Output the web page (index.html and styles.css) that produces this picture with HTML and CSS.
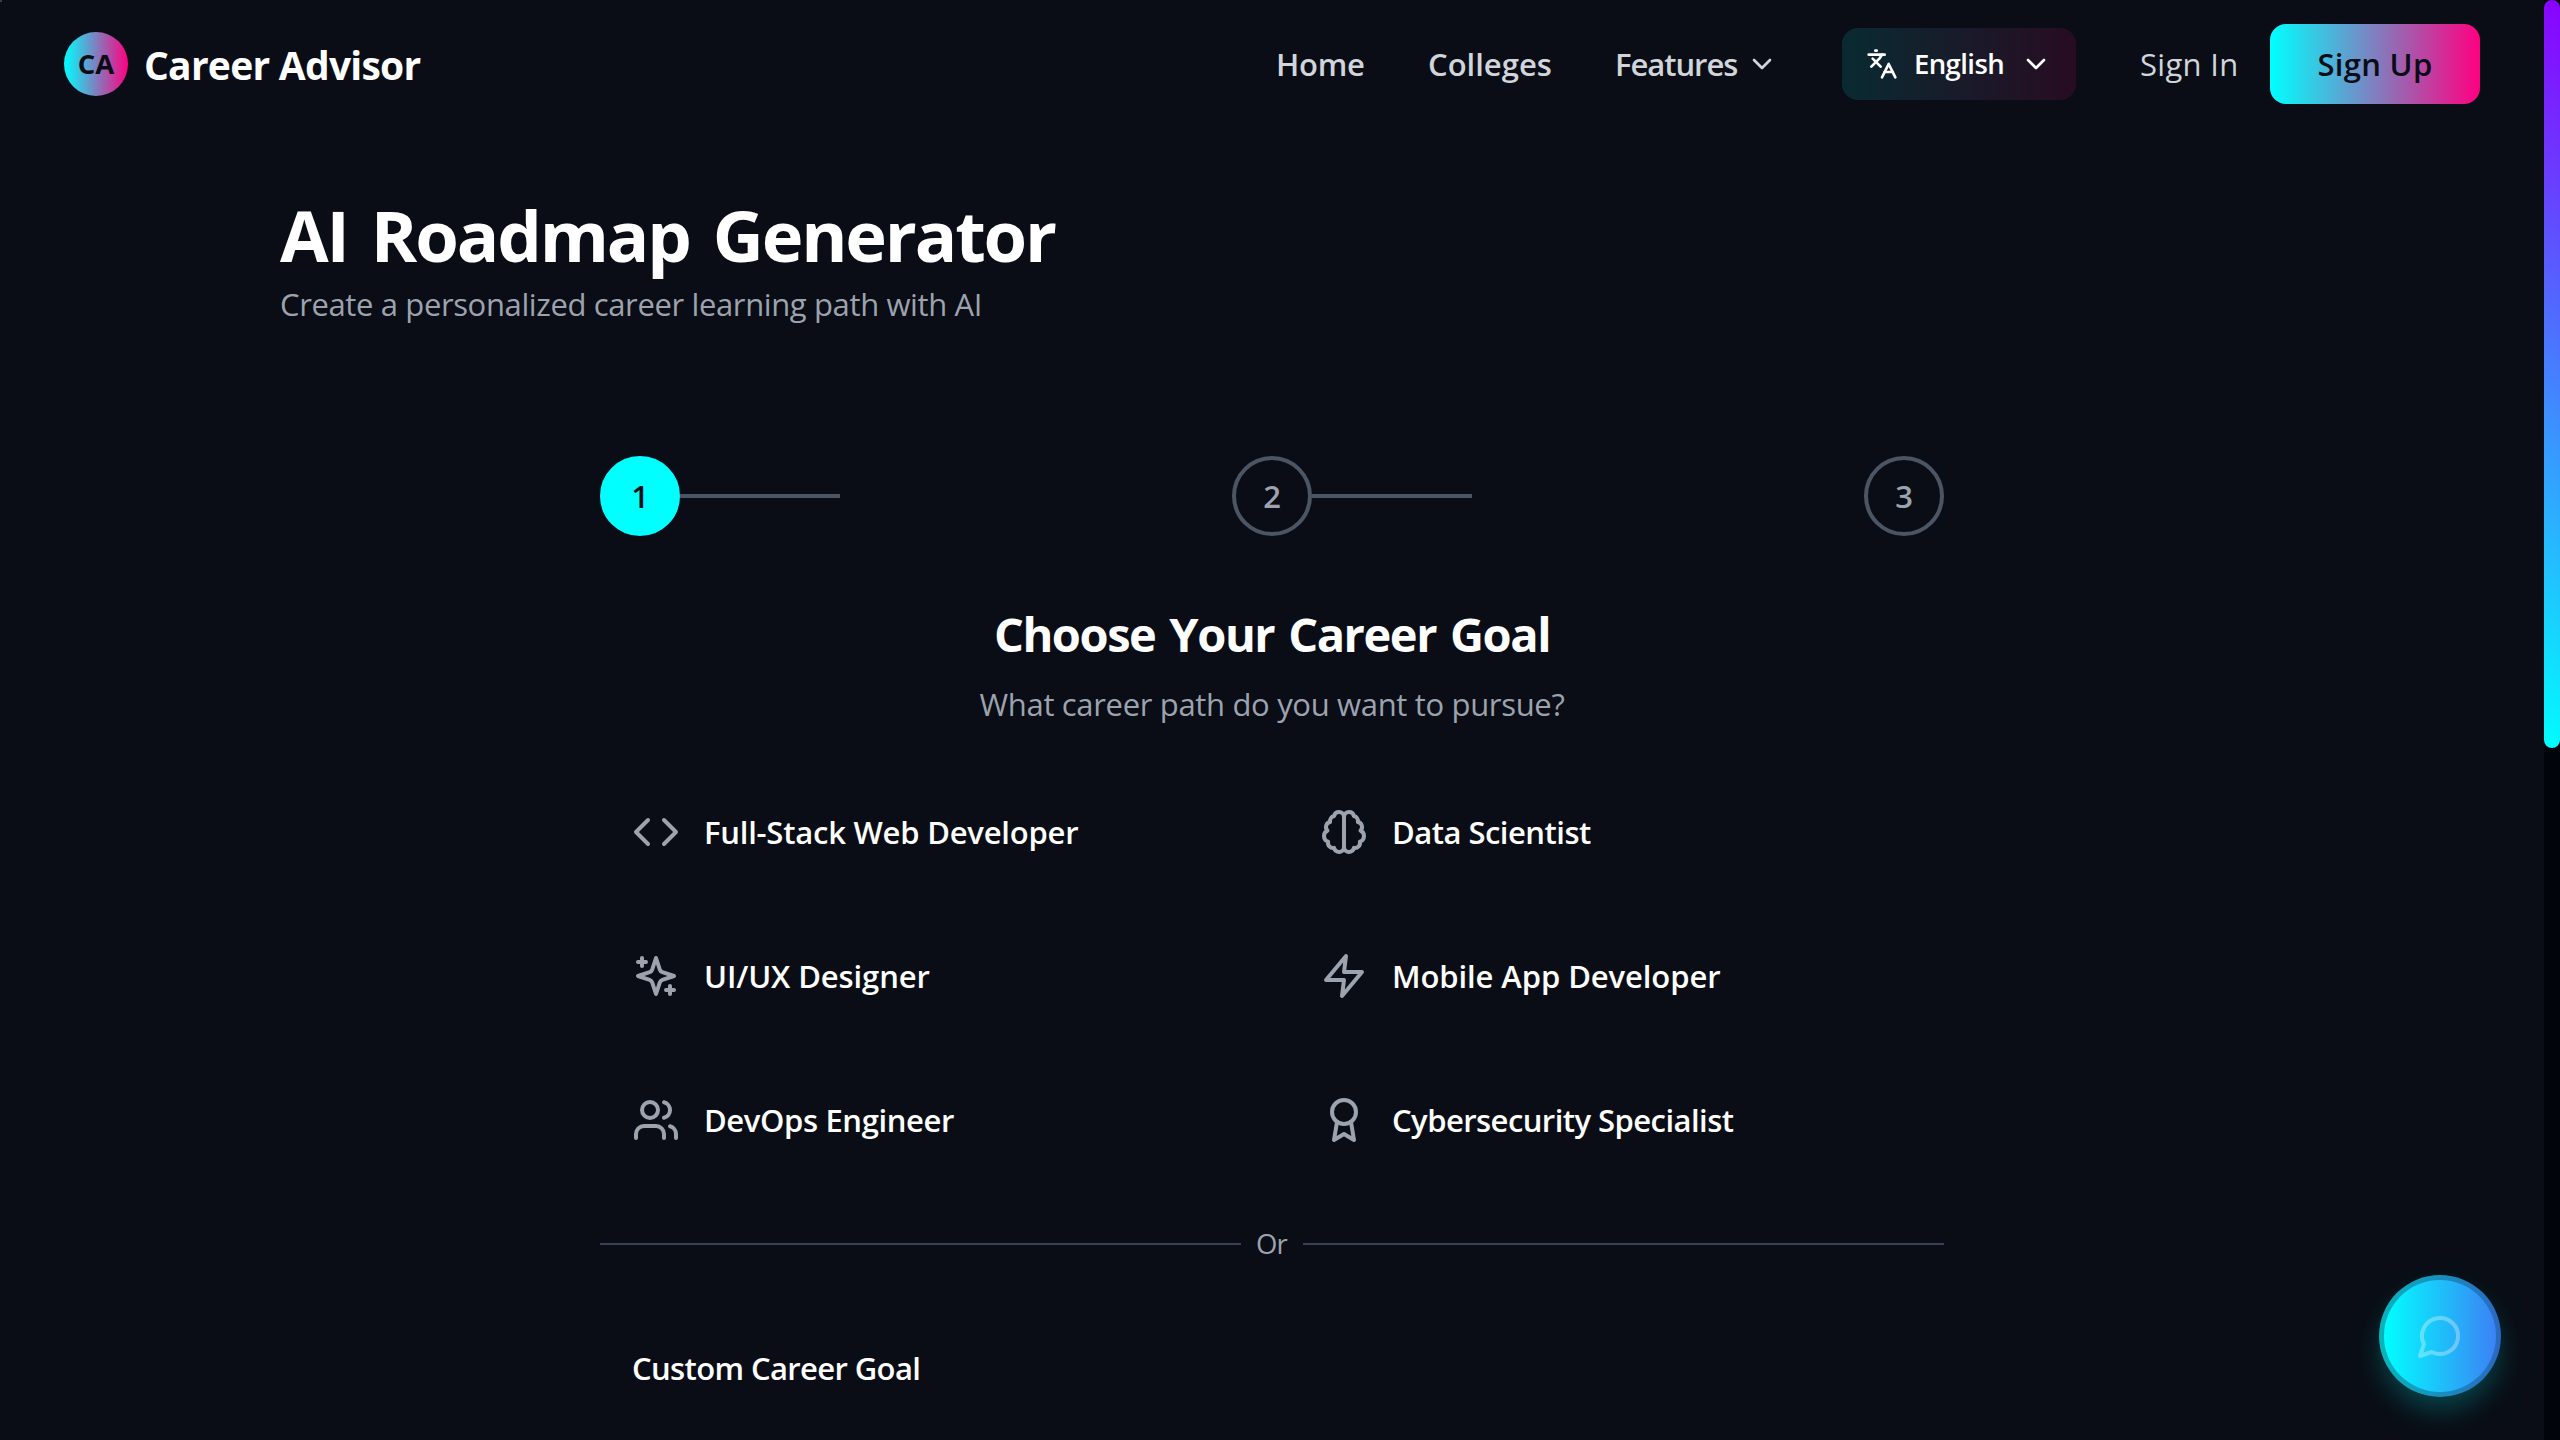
FILE: index.html
```html
<!DOCTYPE html>
<html lang="en">
<head>
<meta charset="utf-8">
<title>AI Roadmap Generator</title>
<link rel="stylesheet" href="styles.css">
</head>
<body>
<div class="corner"></div>
<div class="page">
  <header class="nav">
    <div class="brand">
      <span class="logo">CA</span>
      <span class="brand-name">Career Advisor</span>
    </div>
    <nav class="menu">
      <a class="link home">Home</a>
      <a class="link colleges">Colleges</a>
      <a class="link features"><span class="features-label">Features</span>
        <svg class="icon-sm" viewBox="0 0 24 24"><path d="m6 9 6 6 6-6"/></svg></a>
      <button class="language">
        <svg class="icon-sm" viewBox="0 0 24 24"><path d="m5 8 6 6"/><path d="m4 14 6-6 2-3"/><path d="M2 5h12"/><path d="M7 2h1"/><path d="m22 22-5-10-5 10"/><path d="M14 18h6"/></svg>
        <span class="language-label">English</span>
        <svg class="icon-sm" viewBox="0 0 24 24"><path d="m6 9 6 6 6-6"/></svg>
      </button>
      <div class="auth">
        <a class="sign-in">Sign In</a>
        <button class="sign-up">Sign Up</button>
      </div>
    </nav>
  </header>

  <main class="main">
    <h1 class="title">AI Roadmap Generator</h1>
    <p class="subtitle">Create a personalized career learning path with AI</p>

    <section class="wizard">
      <div class="steps">
        <div class="step"><span class="dot active">1</span><span class="bar"></span></div>
        <div class="step"><span class="dot">2</span><span class="bar"></span></div>
        <div class="step"><span class="dot">3</span></div>
      </div>

      <h2 class="heading">Choose Your Career Goal</h2>
      <p class="question">What career path do you want to pursue?</p>

      <div class="goals">
        <div class="goal">
          <svg class="icon" viewBox="0 0 24 24"><path d="m16 18 6-6-6-6"/><path d="m8 6-6 6 6 6"/></svg>
          <span class="goal-name fullstack">Full-Stack Web Developer</span>
        </div>
        <div class="goal">
          <svg class="icon" viewBox="0 0 24 24"><path d="M9.5 2A2.5 2.5 0 0 1 12 4.5v15a2.5 2.5 0 0 1-4.96.44 2.5 2.5 0 0 1-2.96-3.08 3 3 0 0 1-.34-5.58 2.5 2.5 0 0 1 1.32-4.24 2.5 2.5 0 0 1 1.98-3A2.5 2.5 0 0 1 9.5 2Z"/><path d="M14.5 2A2.5 2.5 0 0 0 12 4.5v15a2.5 2.5 0 0 0 4.96.44 2.5 2.5 0 0 0 2.96-3.08 3 3 0 0 0 .34-5.58 2.5 2.5 0 0 0-1.32-4.24 2.5 2.5 0 0 0-1.98-3A2.5 2.5 0 0 0 14.5 2Z"/></svg>
          <span class="goal-name data">Data Scientist</span>
        </div>
        <div class="goal">
          <svg class="icon" viewBox="0 0 24 24"><path d="m12 3-1.912 5.813a2 2 0 0 1-1.275 1.275L3 12l5.813 1.912a2 2 0 0 1 1.275 1.275L12 21l1.912-5.813a2 2 0 0 1 1.275-1.275L21 12l-5.813-1.912a2 2 0 0 1-1.275-1.275L12 3Z"/><path d="M5 3v4"/><path d="M19 17v4"/><path d="M3 5h4"/><path d="M17 19h4"/></svg>
          <span class="goal-name design">UI/UX Designer</span>
        </div>
        <div class="goal">
          <svg class="icon" viewBox="0 0 24 24"><path d="M13 2 3 14h9l-1 8 10-12h-9l1-8z"/></svg>
          <span class="goal-name mobile">Mobile App Developer</span>
        </div>
        <div class="goal">
          <svg class="icon" viewBox="0 0 24 24"><path d="M16 21v-2a4 4 0 0 0-4-4H6a4 4 0 0 0-4 4v2"/><circle cx="9" cy="7" r="4"/><path d="M22 21v-2a4 4 0 0 0-3-3.87"/><path d="M16 3.13a4 4 0 0 1 0 7.75"/></svg>
          <span class="goal-name devops">DevOps Engineer</span>
        </div>
        <div class="goal">
          <svg class="icon" viewBox="0 0 24 24"><circle cx="12" cy="8" r="6"/><path d="M15.477 12.89 17 22l-5-3-5 3 1.523-9.11"/></svg>
          <span class="goal-name security">Cybersecurity Specialist</span>
        </div>
      </div>

      <div class="divider"><span class="or">Or</span></div>
      <div class="custom"><h3 class="custom-title">Custom Career Goal</h3></div>
    </section>
  </main>
</div>
<div class="scrollbar"><div class="thumb"></div></div>
<button class="chat">
  <svg class="icon chat-icon" viewBox="0 0 24 24"><path d="M7.9 20A9 9 0 1 0 4 16.1L2 22Z"/></svg>
</button>
</body>
</html>
```
FILE: styles.css
```css
* { box-sizing: border-box; margin: 0; padding: 0; }

body {
  display: flex;
  height: 1440px;
  overflow: hidden;
  background: #0a0d15;
  color: #fff;
  font-family: "Open Sans", "Noto Sans", sans-serif;
  font-size: 31px;
  line-height: 48px;
}

button { border: 0; font-family: inherit; color: inherit; }
svg { display: block; flex: none; fill: none; stroke: currentColor; stroke-width: 2; stroke-linecap: round; stroke-linejoin: round; }
.icon-sm { width: 32px; height: 32px; }
.icon { width: 48px; height: 48px; color: #9ca3af; }

.corner { position: absolute; left: 0; top: 0; width: 2px; height: 2px; background: #3a3d43; }
.page { width: 2544px; }

/* Navigation */
.nav { display: flex; justify-content: space-between; align-items: center; height: 128px; padding: 0 64px; white-space: nowrap; }
.brand { display: flex; align-items: center; gap: 16px; }
.logo {
  width: 64px; height: 64px; border-radius: 50%;
  background: linear-gradient(90deg, #00ffff, #ff0080);
  color: #0a0d15; font-size: 27.5px; font-weight: 700; line-height: 63px; text-align: center;
}
.brand-name { font-size: 39px; font-weight: 700; line-height: 56px; letter-spacing: -.75px; padding-top: 2px; }
.menu { display: flex; align-items: center; gap: 64px; }
.link { color: #d1d5db; font-weight: 600; }
.home { width: 88px; letter-spacing: -.26px; }
.colleges { width: 124px; }
.features { display: flex; align-items: center; gap: 8px; }
.features-label { width: 122px; margin-left: -1px; margin-right: 1px; letter-spacing: -1.05px; }
.language {
  display: flex; align-items: center; gap: 16px;
  height: 72px; padding: 0 24px; border-radius: 16px;
  background: linear-gradient(90deg, rgba(0, 255, 255, .12), rgba(255, 0, 128, .12));
}
.language-label { width: 90px; font-size: 27.5px; font-weight: 650; line-height: 40px; letter-spacing: -.6px; text-align: left; }
.auth { display: flex; align-items: center; gap: 32px; }
.sign-in { width: 98px; color: #d1d5db; letter-spacing: .3px; }
.sign-up {
  width: 210px; height: 80px; border-radius: 16px;
  background: linear-gradient(90deg, #00ffff, #ff0080);
  color: #0a0d15; font-size: 31px; font-weight: 550; line-height: 48px; letter-spacing: .3px;
}

/* Page heading */
.main { padding: 65px 280px 0; }
.title { font-size: 70.5px; font-weight: 700; line-height: 84px; letter-spacing: -2.15px; word-spacing: 7px; }
.subtitle { margin-top: 3px; color: #9ca3af; letter-spacing: -.37px; }

/* Wizard */
.wizard { width: 1344px; margin: 128px auto 0; }
.steps { display: flex; justify-content: space-between; }
.step { display: flex; align-items: center; }
.dot {
  width: 80px; height: 80px; border: 4px solid #4b5563; border-radius: 50%;
  color: #9ca3af; font-weight: 600; line-height: 73px; text-align: center;
}
.dot.active { border-color: #00ffff; background: #00ffff; color: #0a0d15; }
.bar { width: 160px; height: 4px; background: #4b5563; }

.heading { margin-top: 66px; font-size: 47px; font-weight: 700; line-height: 64px; letter-spacing: -1.45px; word-spacing: 3.2px; text-align: center; }
.question { margin-top: 14px; color: #9ca3af; letter-spacing: -.33px; text-align: center; }

.goals { display: grid; grid-template-columns: 1fr 1fr; gap: 32px; margin-top: 48px; }
.goal { display: flex; align-items: center; gap: 24px; height: 112px; padding: 0 32px; }
.goal-name { font-weight: 600; }
.fullstack { letter-spacing: -.22px; }
.data { letter-spacing: -.51px; }
.design { letter-spacing: -.12px; }
.mobile { letter-spacing: -.09px; }
.devops { letter-spacing: -.37px; }
.security { letter-spacing: -.55px; }

.divider { display: flex; align-items: center; gap: 16px; height: 40px; margin-top: 48px; }
.divider::before, .divider::after { content: ""; flex: 1; height: 2px; background: #393f54; }
.or { width: 30px; color: #9ca3af; font-size: 27.5px; line-height: 40px; letter-spacing: -.89px; text-indent: -1px; }

.custom { margin-top: 80px; padding: 0 32px; }
.custom-title { font-size: 31px; font-weight: 600; letter-spacing: -.62px; }

/* Page scrollbar */
.scrollbar { width: 16px; background: #02040c; }
.thumb { height: 748px; border-radius: 8px; background: linear-gradient(45deg, #00ffff, #8b00ff); }

/* Floating chat button */
.chat {
  position: absolute; left: 2379px; top: 1275px;
  display: flex; align-items: center; justify-content: center;
  width: 122px; height: 122px; border-radius: 50%;
  background: linear-gradient(90deg, #00ffff, #3b82f6) padding-box, linear-gradient(90deg, #08b5bc, #2a68bf) border-box;
  border: 5px solid transparent;
  box-shadow: 0 16px 48px rgba(0, 255, 255, .07), 0 14px 26px -4px rgba(0, 255, 255, .2);
}
.chat-icon { color: rgba(255, 255, 255, .32); }
```
